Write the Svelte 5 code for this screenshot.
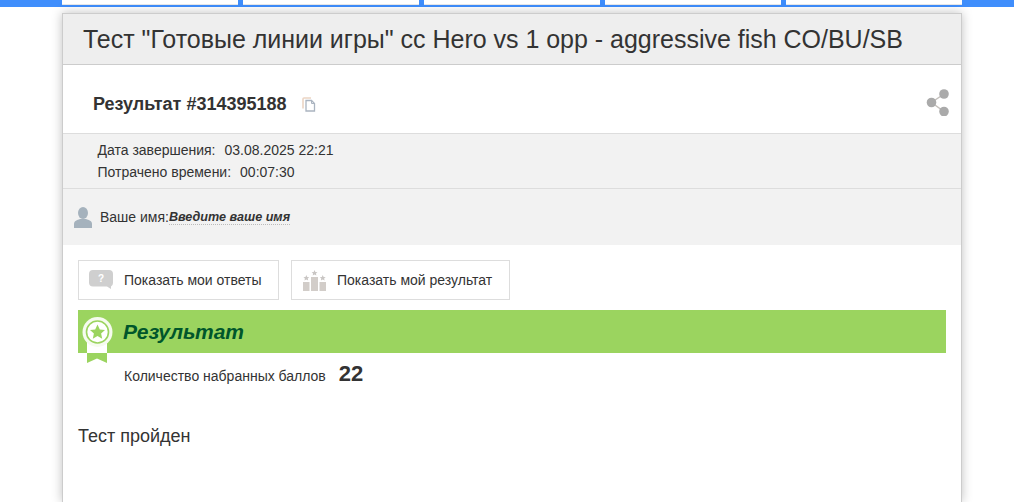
<script>
  const tabs = [1, 2, 3, 4, 5];
</script>

<div class="nav">
  {#each tabs as t (t)}
    <div class="tab"></div>
  {/each}
</div>

<main class="card">
  <h1 class="title">Тест "Готовые линии игры" сс Hero vs 1 opp - aggressive fish CO/BU/SB</h1>

  <div class="head">
    <span class="num">Результат #314395188</span>
    <svg class="copy" width="14" height="15" viewBox="0 0 14 15" fill="none">
      <path d="M9 1H2a1 1 0 0 0-1 1v9.500" stroke="#ecd5c4" stroke-width="1.600" />
      <path d="M4 3.500h5.500l3 3v7.500H4z" fill="#fff" stroke="#aab4c0" stroke-width="1.300" />
      <path d="M9.500 3.500v3h3" stroke="#aab4c0" />
    </svg>
    <svg class="share" width="24" height="27" viewBox="0 0 24 27">
      <path d="M18 5 5.500 13.500 18 22.500" fill="none" stroke="#c4c0bc" stroke-width="1.500" />
      <circle cx="18" cy="5" r="4.800" fill="#aaa" />
      <circle cx="5.500" cy="13.500" r="4.800" fill="#aaa" />
      <circle cx="18" cy="22.500" r="4.800" fill="#aaa" />
    </svg>
  </div>

  <div class="meta">
    <div>Дата завершения:<span class="val">03.08.2025 22:21</span></div>
    <div>Потрачено времени:<span class="val">00:07:30</span></div>
  </div>

  <div class="name">
    <svg width="18" height="21" viewBox="0 0 18 21">
      <ellipse cx="9" cy="6" rx="5" ry="6" fill="#a5b2bd" />
      <path d="M0 21v-4c0-3 3-4 6-5h6c3 1 6 2 6 5v4z" fill="#a5b2bd" />
    </svg>
    <span class="label">Ваше имя:</span><span class="editable">Введите ваше имя</span>
  </div>

  <div class="body">
    <div class="buttons">
      <button class="btn">
        <svg width="24" height="20" viewBox="0 0 24 20">
          <path d="M4 0h16a4 4 0 0 1 4 4v9a4 4 0 0 1-2 3.500V19l-4-2.500H4a4 4 0 0 1-4-4V4a4 4 0 0 1 4-4z" fill="#cfcfcf" />
          <text x="12" y="12" class="q">?</text>
        </svg>
        Показать мои ответы
      </button>
      <button class="btn wide">
        <svg width="23" height="21" viewBox="0 0 23 21">
          <rect x="0" y="12" width="6.500" height="9" fill="#d2cdc9" />
          <rect x="8" y="7" width="7" height="14" fill="#d2cdc9" />
          <rect x="16.500" y="12" width="6.500" height="9" fill="#d2cdc9" />
          <path d="M3.300 5l.9 2 2.100.2-1.600 1.400.5 2-1.900-1.100-1.800 1.100.4-2L.4 7.200l2.100-.2zM11.500 0l.9 2 2.100.2-1.600 1.400.5 2-1.900-1.100-1.800 1.100.4-2-1.500-1.400 2.100-.2zM19.700 5l.9 2 2.100.2-1.600 1.400.5 2-1.900-1.100-1.800 1.100.4-2-1.500-1.400 2.100-.2z" fill="#c9c6c4" />
        </svg>
        Показать мой результат
      </button>
    </div>

    <div class="banner">
      <h2>Результат</h2>
      <svg class="badge" width="32" height="48" viewBox="0 0 32 48">
        <rect x="5" y="22" width="20" height="15" fill="#fff" />
        <path d="M5 37h20v10l-10-4.500L5 47z" fill="#9bd45f" />
        <circle cx="15.500" cy="16" r="15" fill="#f6fbef" />
        <circle cx="15.500" cy="16" r="11" fill="#fff" stroke="#9bd45f" stroke-width="1.600" />
        <path d="M15.500 8.500l2.300 4.900 5.200.6-3.900 3.500 1.100 5.200-4.700-2.700-4.700 2.700 1.100-5.200L8 14l5.200-.6z" fill="#9bd45f" />
      </svg>
    </div>

    <div class="score">
      <span>Количество набранных баллов</span>
      <strong>22</strong>
    </div>

    <p class="passed">Тест пройден</p>
  </div>
</main>

<style>
  :global(body) {
    margin: 0;
    background: #fff;
    font-family: "Liberation Sans", Arial, sans-serif;
    color: #333;
    overflow: hidden;
  }
  .nav {
    display: flex;
    gap: 5px;
    height: 7px;
    padding: 0 52px 0 62px;
    background: #3f8efc;
  }
  .tab {
    width: 176px;
    height: 5px;
    background: #fff;
    border-bottom: 1px solid #e6e6e6;
    box-sizing: border-box;
  }
  .card {
    width: 898px;
    height: 488px;
    margin: 6px 0 0 62px;
    border: 1px solid #ccc;
    border-bottom: 0;
    background: #fff;
    box-shadow: 0 0 10px rgba(0, 0, 0, 0.25);
  }
  .title {
    margin: 0;
    height: 50px;
    padding-left: 20px;
    background: #eee;
    border-bottom: 1px solid #ccc;
    font-size: 25px;
    font-weight: 400;
    letter-spacing: -0.015px;
    line-height: 51px;
    white-space: nowrap;
  }
  .head {
    display: flex;
    align-items: center;
    height: 58px;
    padding: 10px 11px 0 30px;
    border-bottom: 1px solid #ddd;
  }
  .num {
    font-size: 18px;
    font-weight: 700;
  }
  .copy {
    margin-left: 15px;
  }
  .share {
    margin: -4px 0 0 auto;
  }
  .meta {
    height: 49px;
    padding: 5px 0 0 34.500px;
    background: #f2f2f2;
    border-bottom: 1px solid #ddd;
    font-size: 14px;
    line-height: 22px;
  }
  .val {
    margin-left: 9px;
  }
  .name {
    display: flex;
    align-items: center;
    height: 56px;
    padding-left: 11px;
    background: #f2f2f2;
    font-size: 14px;
  }
  .name svg {
    margin-right: 8px;
  }
  .editable {
    font-size: 12.600px;
    font-weight: 700;
    font-style: italic;
    border-bottom: 1px dotted #bbb;
  }
  .body {
    padding: 15px 15px 0;
  }
  .buttons {
    display: flex;
    gap: 12px;
  }
  .btn {
    display: flex;
    align-items: center;
    gap: 11px;
    width: 201px;
    height: 40px;
    padding: 0 0 0 10px;
    border: 1px solid #ddd;
    background: #fff;
    color: #333;
    font: 14px "Liberation Sans", Arial, sans-serif;
    white-space: nowrap;
  }
  .btn.wide {
    width: 219px;
    padding-left: 11px;
  }
  .q {
    fill: #fff;
    font: 700 10px "Liberation Sans", Arial, sans-serif;
    text-anchor: middle;
  }
  .banner {
    position: relative;
    height: 43px;
    margin-top: 10px;
    background: #9bd45f;
  }
  .banner h2 {
    margin: 0;
    padding-left: 45px;
    color: #00562b;
    font-size: 21px;
    font-weight: 700;
    font-style: italic;
    line-height: 44px;
  }
  .badge {
    position: absolute;
    left: 4px;
    top: 6px;
  }
  .score {
    display: flex;
    align-items: baseline;
    gap: 13px;
    height: 42px;
    padding-left: 46px;
    font-size: 14px;
    line-height: 42px;
  }
  .score strong {
    font-size: 22px;
  }
  .passed {
    margin: 30px 0 0;
    font-size: 18px;
    line-height: 22px;
  }
</style>
